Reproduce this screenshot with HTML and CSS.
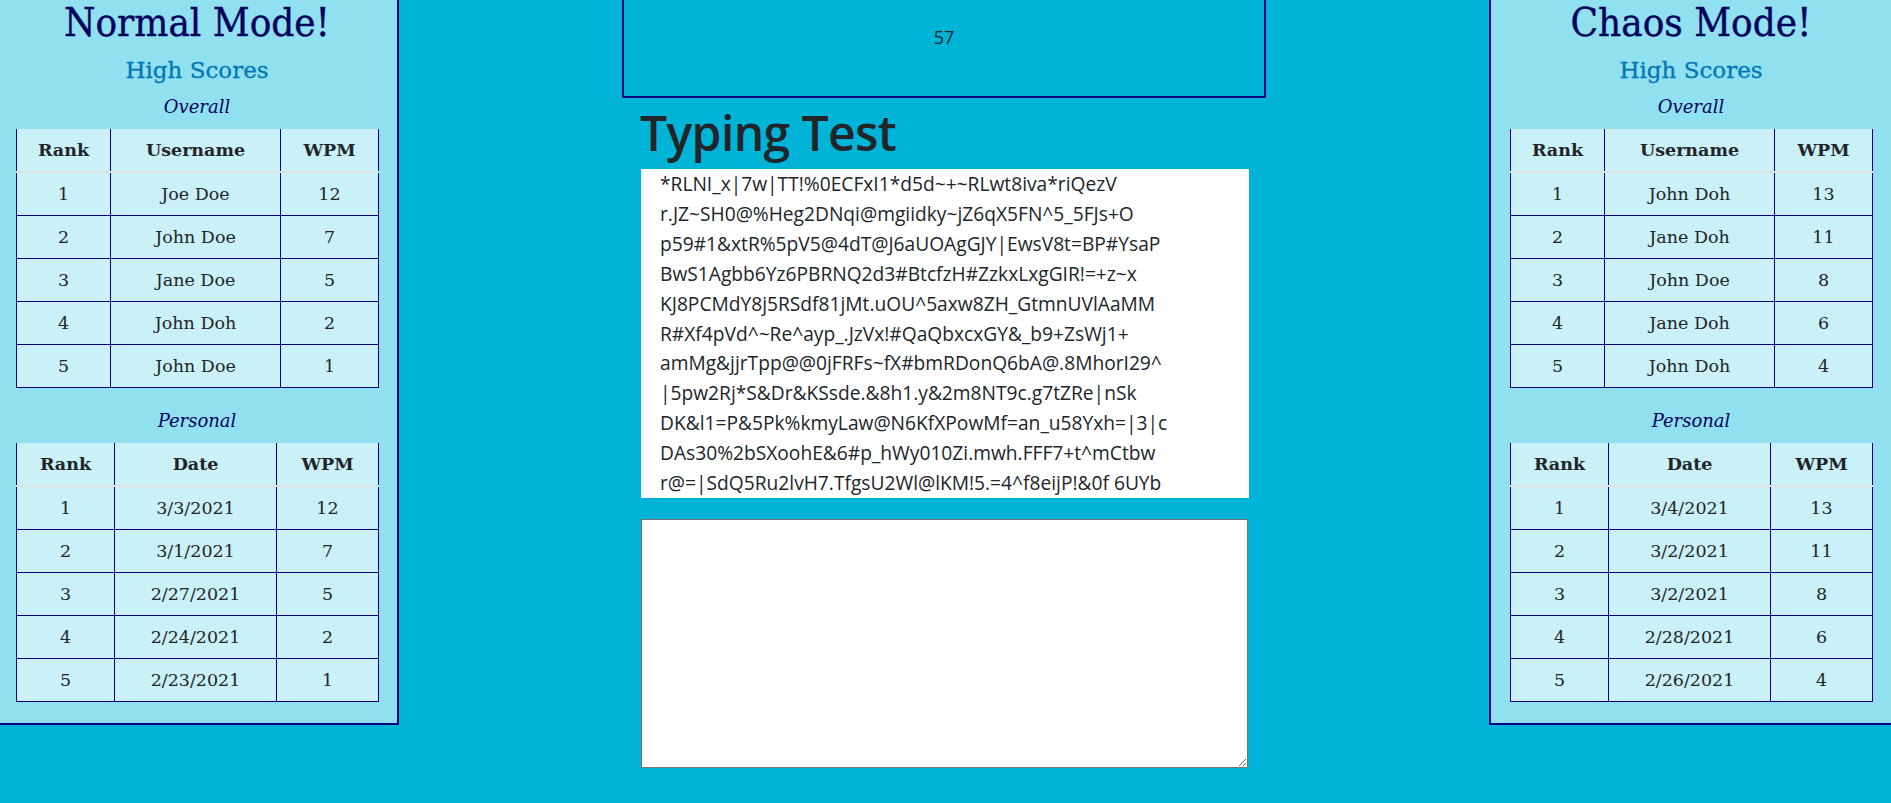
FILE: index.html
```html
<!DOCTYPE html>
<html lang="en">
<head>
<meta charset="utf-8">
<title>Typing Test</title>
<link rel="stylesheet" href="styles.css">
</head>
<body>
<div class="page">
  <aside class="panel panel-left">
    <h2 class="mode-title">Normal Mode!</h2>
    <h3 class="hs-title">High Scores</h3>
    <p class="section-title">Overall</p>
    <table class="scores">
      <colgroup><col class="c-rank"><col class="c-name"><col class="c-wpm"></colgroup>
      <thead><tr><th>Rank</th><th>Username</th><th>WPM</th></tr></thead>
      <tbody>
        <tr><td>1</td><td>Joe Doe</td><td>12</td></tr>
        <tr><td>2</td><td>John Doe</td><td>7</td></tr>
        <tr><td>3</td><td>Jane Doe</td><td>5</td></tr>
        <tr><td>4</td><td>John Doh</td><td>2</td></tr>
        <tr><td>5</td><td>John Doe</td><td>1</td></tr>
      </tbody>
    </table>
    <p class="section-title section-gap">Personal</p>
    <table class="scores">
      <colgroup><col class="p-rank"><col class="p-date"><col class="p-wpm"></colgroup>
      <thead><tr><th>Rank</th><th>Date</th><th>WPM</th></tr></thead>
      <tbody>
        <tr><td>1</td><td>3/3/2021</td><td>12</td></tr>
        <tr><td>2</td><td>3/1/2021</td><td>7</td></tr>
        <tr><td>3</td><td>2/27/2021</td><td>5</td></tr>
        <tr><td>4</td><td>2/24/2021</td><td>2</td></tr>
        <tr><td>5</td><td>2/23/2021</td><td>1</td></tr>
      </tbody>
    </table>
  </aside>

  <main class="center">
    <div class="timer">57</div>
    <div class="inner">
      <h1 class="test-title">Typing Test</h1>
      <div class="prompt">
        <div class="line">*RLNI_x|7w|TT!%0ECFxI1*d5d~+~RLwt8iva*riQezV</div>
        <div class="line">r.JZ~SH0@%Heg2DNqi@mgiidky~jZ6qX5FN^5_5FJs+O</div>
        <div class="line">p59#1&amp;xtR%5pV5@4dT@J6aUOAgGJY|EwsV8t=BP#YsaP</div>
        <div class="line">BwS1Agbb6Yz6PBRNQ2d3#BtcfzH#ZzkxLxgGIR!=+z~x</div>
        <div class="line">KJ8PCMdY8j5RSdf81jMt.uOU^5axw8ZH_GtmnUVlAaMM</div>
        <div class="line">R#Xf4pVd^~Re^ayp_.JzVx!#QaQbxcxGY&amp;_b9+ZsWj1+</div>
        <div class="line">amMg&amp;jjrTpp@@0jFRFs~fX#bmRDonQ6bA@.8MhorI29^</div>
        <div class="line">|5pw2Rj*S&amp;Dr&amp;KSsde.&amp;8h1.y&amp;2m8NT9c.g7tZRe|nSk</div>
        <div class="line">DK&amp;l1=P&amp;5Pk%kmyLaw@N6KfXPowMf=an_u58Yxh=|3|c</div>
        <div class="line">DAs30%2bSXoohE&amp;6#p_hWy010Zi.mwh.FFF7+t^mCtbw</div>
        <div class="line">r@=|SdQ5Ru2lvH7.TfgsU2Wl@lKM!5.=4^f8eijP!&amp;0f 6UYb</div>
      </div>
      <textarea class="answer"></textarea>
    </div>
  </main>

  <aside class="panel panel-right">
    <h2 class="mode-title">Chaos Mode!</h2>
    <h3 class="hs-title">High Scores</h3>
    <p class="section-title">Overall</p>
    <table class="scores">
      <colgroup><col class="c-rank"><col class="c-name"><col class="c-wpm"></colgroup>
      <thead><tr><th>Rank</th><th>Username</th><th>WPM</th></tr></thead>
      <tbody>
        <tr><td>1</td><td>John Doh</td><td>13</td></tr>
        <tr><td>2</td><td>Jane Doh</td><td>11</td></tr>
        <tr><td>3</td><td>John Doe</td><td>8</td></tr>
        <tr><td>4</td><td>Jane Doh</td><td>6</td></tr>
        <tr><td>5</td><td>John Doh</td><td>4</td></tr>
      </tbody>
    </table>
    <p class="section-title section-gap">Personal</p>
    <table class="scores">
      <colgroup><col class="p-rank"><col class="p-date"><col class="p-wpm"></colgroup>
      <thead><tr><th>Rank</th><th>Date</th><th>WPM</th></tr></thead>
      <tbody>
        <tr><td>1</td><td>3/4/2021</td><td>13</td></tr>
        <tr><td>2</td><td>3/2/2021</td><td>11</td></tr>
        <tr><td>3</td><td>3/2/2021</td><td>8</td></tr>
        <tr><td>4</td><td>2/28/2021</td><td>6</td></tr>
        <tr><td>5</td><td>2/26/2021</td><td>4</td></tr>
      </tbody>
    </table>
  </aside>
</div>
</body>
</html>
```

FILE: styles.css
```css
html, body {
  margin: 0;
  padding: 0;
  background: #00b4d8;
  overflow: hidden;
  height: 803px;
}

body {
  font-family: "Open Sans", "Noto Sans", sans-serif;
  color: #212529;
}

.page {
  display: flex;
  align-items: flex-start;
  margin-top: -5px;
  width: 1893px;
}

.panel {
  flex-shrink: 0;
  box-sizing: border-box;
  width: 404px;
  padding: 0 19px 21px;
  border: 2px solid #000080;
  background: #90e0ef;
  text-align: center;
  font-family: "DejaVu Serif", "Liberation Serif", serif;
}

.panel-left {
  margin-left: -5px;
}

.panel-right {
  margin-left: 223px;
}

.mode-title {
  margin: 0;
  font-family: "DejaVu Serif Condensed", "DejaVu Serif", serif;
  font-stretch: condensed;
  font-size: 40px;
  line-height: 50px;
  font-weight: 400;
  color: #03045e;
  -webkit-text-stroke: 0.4px #03045e;
}

.hs-title {
  margin: 6px 0 0;
  font-size: 23px;
  line-height: 34px;
  font-weight: 400;
  color: #0077b6;
  -webkit-text-stroke: 0.3px #0077b6;
}

.section-title {
  margin: 7px 0 0;
  font-size: 18px;
  line-height: 26px;
  font-style: italic;
  color: #03045e;
}

.section-gap {
  margin-top: 20px;
}

.scores {
  margin-top: 9px;
  width: 100%;
  table-layout: fixed;
  border-collapse: collapse;
  background: #caf0f8;
  font-size: 17.5px;
  color: #212529;
}

.c-rank { width: 94px; }
.c-name { width: 170px; }
.c-wpm { width: 98px; }
.p-rank { width: 98px; }
.p-date { width: 162px; }
.p-wpm { width: 102px; }

.scores th,
.scores td {
  padding: 7px 4px;
  line-height: 28px;
  text-align: center;
  white-space: nowrap;
}

.scores th {
  font-weight: 700;
  border-left: 1px solid #000080;
  border-right: 1px solid #000080;
  border-bottom: 2px solid #dee2e6;
}

.scores td {
  font-weight: 400;
  border: 1px solid #000080;
}

.center {
  flex-shrink: 0;
  width: 644px;
  margin-left: 223px;
}

.timer {
  box-sizing: border-box;
  height: 103px;
  padding: 28px 0 47px;
  border: 2px solid #000080;
  text-align: center;
  font-size: 18px;
  line-height: 24px;
  color: #212529;
}

.inner {
  margin: 0 17px 0 19px;
}

.test-title {
  margin: 6px 0 8px -1px;
  font-size: 48px;
  line-height: 57px;
  font-weight: 600;
  letter-spacing: -0.6px;
  color: #212529;
}

.prompt {
  box-sizing: border-box;
  height: 329px;
  overflow: hidden;
  background: #ffffff;
  padding: 0 19px;
  font-size: 19.2px;
  line-height: 29.9px;
  color: #212529;
}

.line {
  white-space: nowrap;
}

.answer {
  display: block;
  box-sizing: border-box;
  margin-top: 21px;
  width: 607px;
  height: 249px;
  border: 1px solid #767676;
  background: #ffffff;
  padding: 2px;
}
```
